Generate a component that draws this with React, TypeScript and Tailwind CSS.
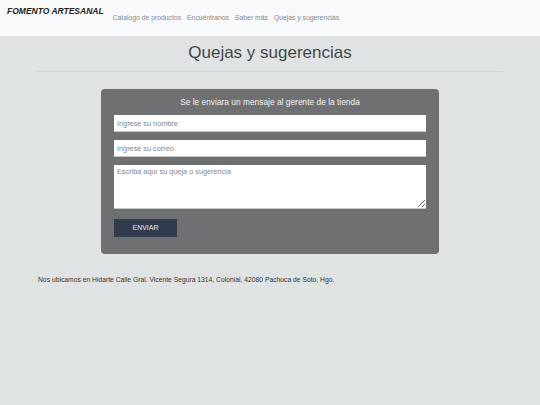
export default function App() {
  return (
    <div className="min-h-[405px] bg-[#e0e3e4] font-['Liberation_Sans',Arial,sans-serif]">
      <nav className="flex h-[36px] items-start bg-[#f8f9fa] pl-[7px]">
        <span className="mt-[6px] text-[8.5px] font-bold italic leading-[11px] text-[#222]">FOMENTO ARTESANAL</span>
        <ul className="ml-[9px] mt-[13px] flex gap-[6px] text-[6.8px] leading-[9px] text-[#8a8a8a]">
          <li>Catalogo de productos</li>
          <li>Encuéntranos</li>
          <li>Saber más</li>
          <li>Quejas y sugerencias</li>
        </ul>
      </nav>

      <main className="px-[37px]">
        <h1 className="pt-[7px] text-center text-[17px] leading-[20px] text-[#454647]">Quejas y sugerencias</h1>
        <hr className="mt-[8px] border-t border-[#d2d6d7]" />

        <div className="mx-auto mt-[17px] w-[338px] rounded-[4px] bg-[#6f7072] px-[13px] pb-[17px] pt-[8px]">
          <p className="text-center text-[8.4px] leading-[11px] text-[#f2f2f2]">Se le enviara un mensaje al gerente de la tienda</p>
          <form className="mt-[7px] flex flex-col">
            <input
              className="h-[17px] w-full border-b border-[#c8c8c8] bg-white px-[3px] text-[7.3px] text-[#555] placeholder:text-[#858585] outline-none"
              placeholder="Ingrese su nombre"
            />
            <input
              className="mt-[8px] h-[17px] w-full border-b border-[#c8c8c8] bg-white px-[3px] text-[7.3px] text-[#555] placeholder:text-[#858585] outline-none"
              placeholder="Ingrese su correo"
            />
            <textarea
              className="mt-[8px] h-[44px] w-full resize-y border-b border-[#c8c8c8] bg-white px-[3px] py-[2px] text-[7.3px] leading-[9px] text-[#555] placeholder:text-[#858585] outline-none"
              placeholder="Escriba aquí su queja o sugerencia"
            />
            <button
              type="button"
              className="mt-[10px] h-[18px] w-[63px] bg-[#323a4e] text-[7px] text-[#e8e8e8]"
            >
              ENVIAR
            </button>
          </form>
        </div>

        <p className="mt-[21px] pl-[1px] text-[6.75px] text-[#333]">
          Nos ubicamos en Hidarte Calle Gral. Vicente Segura 1314, Colonial, 42080 Pachuca de Soto, Hgo.
        </p>
      </main>
    </div>
  );
}
